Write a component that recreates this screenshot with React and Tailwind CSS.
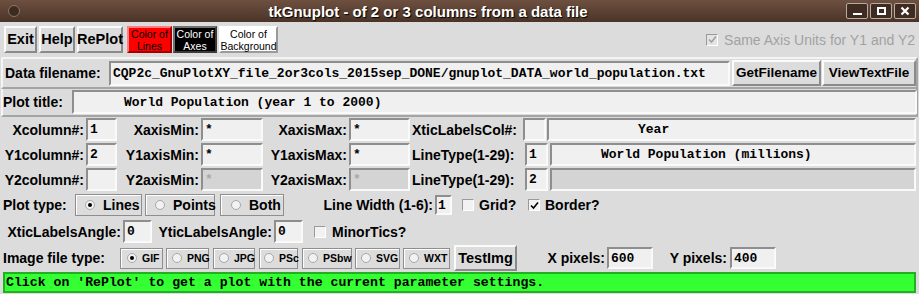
import React from "react";

const SANS = "font-['Liberation_Sans',Arial,sans-serif]";
const MONO = "font-['Liberation_Mono','Courier_New',monospace]";

function Entry({ className = "", children, disabled }) {
  return (
    <div
      className={`box-border border-2 border-t-[#8e8e8e] border-l-[#8e8e8e] border-b-[#fafafa] border-r-[#fafafa] ${
        disabled ? "bg-[#d4d4d4] text-[#a9a9a9]" : "bg-[#f0f0f0] text-black"
      } ${MONO} font-bold text-[13px] leading-none flex items-center pl-[1px] whitespace-pre overflow-hidden shrink-0 ${className}`}
    >
      {children}
    </div>
  );
}

function Label({ className = "", children }) {
  return (
    <div className={`${SANS} font-bold text-[14px] leading-none text-black whitespace-nowrap shrink-0 ${className}`}>
      {children}
    </div>
  );
}

function Button({ className = "", children }) {
  return (
    <div
      className={`box-border border-2 border-t-[#fbfbfb] border-l-[#fbfbfb] border-b-[#8a8a8a] border-r-[#8a8a8a] bg-[#dcdcdc] ${SANS} font-bold text-black flex items-center justify-center leading-none whitespace-nowrap shrink-0 ${className}`}
    >
      {children}
    </div>
  );
}

function Check({ checked, disabled }) {
  return (
    <div
      className={`w-[12px] h-[12px] box-border border border-t-[#9a9a9a] border-l-[#9a9a9a] border-b-[#ffffff] border-r-[#ffffff] ${
        disabled ? "bg-[#e4e4e4]" : "bg-[#f2f2f2]"
      } flex items-center justify-center shrink-0`}
    >
      {checked && (
        <svg width="9" height="9" viewBox="0 0 9 9">
          <path d="M1 4.5 L3.5 7 L8 1.5" fill="none" stroke={disabled ? "#a0a0a0" : "#000"} strokeWidth="1.6" />
        </svg>
      )}
    </div>
  );
}

function Radio({ selected }) {
  return (
    <div className="w-[10px] h-[10px] rounded-full box-border border border-[#a8a8a8] bg-[#f2f2f2] flex items-center justify-center shrink-0">
      {selected && <div className="w-[4px] h-[4px] rounded-full bg-black" />}
    </div>
  );
}

function RadioFrame({ className = "", selected, children, small }) {
  return (
    <div
      className={`box-border border border-[#8e8e8e] shadow-[inset_1px_1px_0_#ffffff] bg-[#dcdcdc] flex items-center shrink-0 ${className}`}
    >
      <Radio selected={selected} />
      <span
        className={`${SANS} font-bold text-black leading-none whitespace-nowrap ${
          small ? "text-[10.5px] ml-[5px]" : "text-[14px] ml-[8px]"
        }`}
      >
        {children}
      </span>
    </div>
  );
}

export default function App() {
  return (
    <div className={`w-[919px] h-[294px] bg-[#dcdcdc] overflow-hidden flex flex-col ${SANS}`}>
      {/* Title bar */}
      <div className="h-[22px] shrink-0 bg-gradient-to-b from-[#6e5040] to-[#4a3427] flex items-center relative">
        <div className="ml-[8px] w-[12px] h-[12px] rounded-full bg-[#3d2b21] border border-[#8a7668]" />
        <div className="flex-1 flex justify-center">
          <span className="text-white font-bold text-[15px] leading-none [text-shadow:1px_1px_1px_#000] ml-[-10px]">
            tkGnuplot - of 2 or 3 columns from a data file
          </span>
        </div>
        <div className="flex items-center gap-[2px] mr-[3px]">
          <div className="w-[22px] h-[16px] box-border border border-[#b8aaa0] rounded-[2px] bg-[#3e2c22] flex items-end justify-center pb-[3px]">
            <div className="w-[9px] h-[2px] bg-white" />
          </div>
          <div className="w-[22px] h-[16px] box-border border border-[#b8aaa0] rounded-[2px] bg-[#3e2c22] flex items-center justify-center">
            <div className="w-[9px] h-[8px] box-border border-2 border-white" />
          </div>
          <div className="w-[22px] h-[16px] box-border border border-[#b8aaa0] rounded-[2px] bg-[#3e2c22] flex items-center justify-center">
            <svg width="10" height="10" viewBox="0 0 10 10">
              <path d="M1.5 1.5 L8.5 8.5 M8.5 1.5 L1.5 8.5" stroke="#fff" strokeWidth="2.2" />
            </svg>
          </div>
        </div>
      </div>

      {/* Row 1: buttons */}
      <div className="h-[35px] shrink-0 flex items-center pl-[4px] pr-[4px]">
        <Button className="w-[33px] h-[27px] text-[14.5px]">Exit</Button>
        <Button className="w-[36px] h-[27px] text-[14.5px] ml-[2px]">Help</Button>
        <Button className="w-[46px] h-[27px] text-[14.5px] ml-[2px]">RePlot</Button>
        <div className="w-[45px] h-[27px] ml-[4px] box-border border-2 border-t-[#ff8080] border-l-[#ff8080] border-b-[#a00000] border-r-[#a00000] bg-[#ff0000] flex flex-col items-center justify-center text-[10.5px] leading-[12px] text-black shrink-0">
          <span>Color of</span>
          <span>Lines</span>
        </div>
        <div className="w-[44px] h-[27px] ml-[1px] box-border border-2 border-t-[#707070] border-l-[#707070] border-b-[#3a3a3a] border-r-[#3a3a3a] bg-black flex flex-col items-center justify-center text-[10.5px] leading-[12px] text-white shrink-0">
          <span>Color of</span>
          <span>Axes</span>
        </div>
        <div className="w-[59px] h-[27px] ml-[2px] box-border border-2 border-t-[#ffffff] border-l-[#ffffff] border-b-[#9a9a9a] border-r-[#9a9a9a] bg-white flex flex-col items-center justify-center text-[10.5px] leading-[12px] text-black shrink-0">
          <span>Color of</span>
          <span>Background</span>
        </div>
        <div className="flex-1" />
        <Check checked disabled />
        <span className="ml-[6px] text-[14px] text-[#a2a2a2] leading-none whitespace-nowrap">
          Same Axis Units for Y1 and Y2
        </span>
      </div>

      {/* Row 2: data filename */}
      <div className="h-[32px] shrink-0 mx-[1px] box-border border-2 border-t-[#f4f4f4] border-l-[#f4f4f4] border-b-[#a4a4a4] border-r-[#a4a4a4] flex items-center">
        <Label className="w-[106px] pl-[2px]">Data filename:</Label>
        <Entry className="w-[621px] h-[25px] text-[13.3px] pl-[2px]">
          CQP2c_GnuPlotXY_file_2or3cols_2015sep_DONE/gnuplot_DATA_world_population.txt
        </Entry>
        <Button className="w-[89px] h-[26px] text-[13.5px] ml-[2px]">GetFilename</Button>
        <Button className="w-[94px] h-[26px] text-[13.5px] ml-[1px]">ViewTextFile</Button>
      </div>

      {/* Row 3: plot title */}
      <div className="h-[28px] shrink-0 mx-[1px] box-border border-l-2 border-r-2 border-b-2 border-l-[#f4f4f4] border-r-[#a4a4a4] border-b-[#a4a4a4] flex items-center">
        <Label className="w-[69px] pl-[0px]">Plot title:</Label>
        <Entry className="w-[845px] h-[24px] pl-[50px]">World Population (year 1 to 2000)</Entry>
      </div>

      {/* Row 4 */}
      <div className="h-[25px] shrink-0 flex items-center">
        <Label className="w-[86px] text-right pr-[2px]">Xcolumn#:</Label>
        <Entry className="w-[31px] h-[23px] pl-[2px]">1</Entry>
        <Label className="w-[84px] text-right pr-[2px]">XaxisMin:</Label>
        <Entry className="w-[62px] h-[23px] pl-[2px]">*</Entry>
        <Label className="w-[86px] text-right pr-[2px]">XaxisMax:</Label>
        <Entry className="w-[61px] h-[23px] pl-[2px]">*</Entry>
        <Label className="w-[113px] pl-[2px]">XticLabelsCol#:</Label>
        <Entry className="w-[23px] h-[23px]"></Entry>
        <Entry className="w-[369px] h-[23px] ml-[1px] pl-[89px]">Year</Entry>
      </div>

      {/* Row 5 */}
      <div className="h-[25px] shrink-0 flex items-center">
        <Label className="w-[86px] text-right pr-[2px]">Y1column#:</Label>
        <Entry className="w-[31px] h-[23px] pl-[2px]">2</Entry>
        <Label className="w-[84px] text-right pr-[2px]">Y1axisMin:</Label>
        <Entry className="w-[62px] h-[23px] pl-[2px]">*</Entry>
        <Label className="w-[86px] text-right pr-[2px]">Y1axisMax:</Label>
        <Entry className="w-[61px] h-[23px] pl-[2px]">*</Entry>
        <Label className="w-[115px] pl-[2px]">LineType(1-29):</Label>
        <Entry className="w-[23px] h-[23px] pl-[2px]">1</Entry>
        <Entry className="w-[366px] h-[23px] ml-[2px] pl-[49px]">World Population (millions)</Entry>
      </div>

      {/* Row 6 */}
      <div className="h-[25px] shrink-0 flex items-center">
        <Label className="w-[86px] text-right pr-[2px]">Y2column#:</Label>
        <Entry className="w-[31px] h-[23px] pl-[2px]"></Entry>
        <Label className="w-[84px] text-right pr-[2px]">Y2axisMin:</Label>
        <Entry disabled className="w-[62px] h-[23px] pl-[2px]">*</Entry>
        <Label className="w-[86px] text-right pr-[2px]">Y2axisMax:</Label>
        <Entry disabled className="w-[61px] h-[23px] pl-[2px]">*</Entry>
        <Label className="w-[115px] pl-[2px]">LineType(1-29):</Label>
        <Entry className="w-[23px] h-[23px] pl-[2px]">2</Entry>
        <Entry disabled className="w-[366px] h-[23px] ml-[2px]"></Entry>
      </div>

      {/* Row 7: plot type */}
      <div className="h-[26px] shrink-0 flex items-center pl-[3px]">
        <Label className="w-[72px]">Plot type:</Label>
        <RadioFrame selected className="w-[67px] h-[22px] pl-[9px]">Lines</RadioFrame>
        <RadioFrame className="w-[70px] h-[22px] pl-[9px] ml-[3px]">Points</RadioFrame>
        <RadioFrame className="w-[64px] h-[22px] pl-[10px] ml-[5px]">Both</RadioFrame>
        <Label className="w-[151px] text-right pr-[2px]">Line Width (1-6):</Label>
        <Entry className="w-[17px] h-[20px] pl-[1px]">1</Entry>
        <div className="ml-[10px]"><Check /></div>
        <Label className="w-[54px] pl-[5px]">Grid?</Label>
        <Check checked />
        <Label className="pl-[5px]">Border?</Label>
      </div>

      {/* Row 8: tic angles */}
      <div className="h-[27px] shrink-0 flex items-center">
        <Label className="w-[123px] text-right pr-[2px]">XticLabelsAngle:</Label>
        <Entry className="w-[29px] h-[23px] pl-[2px]">0</Entry>
        <Label className="w-[122px] text-right pr-[2px]">YticLabelsAngle:</Label>
        <Entry className="w-[29px] h-[23px] pl-[2px]">0</Entry>
        <div className="ml-[11px]"><Check /></div>
        <Label className="pl-[6px]">MinorTics?</Label>
      </div>

      {/* Row 9: image file type */}
      <div className="h-[26px] shrink-0 flex items-center pl-[3px]">
        <Label className="w-[117px]">Image file type:</Label>
        <RadioFrame small selected className="w-[43px] h-[21px] pl-[6px]">GIF</RadioFrame>
        <RadioFrame small className="w-[43px] h-[21px] pl-[5px] ml-[3px]">PNG</RadioFrame>
        <RadioFrame small className="w-[42px] h-[21px] pl-[5px] ml-[4px]">JPG</RadioFrame>
        <RadioFrame small className="w-[39px] h-[21px] pl-[4px] ml-[4px]">PSc</RadioFrame>
        <RadioFrame small className="w-[50px] h-[21px] pl-[5px] ml-[4px]">PSbw</RadioFrame>
        <RadioFrame small className="w-[45px] h-[21px] pl-[5px] ml-[3px]">SVG</RadioFrame>
        <RadioFrame small className="w-[47px] h-[21px] pl-[5px] ml-[3px]">WXT</RadioFrame>
        <Button className="w-[63px] h-[26px] text-[14.5px] ml-[4px]">TestImg</Button>
        <Label className="w-[90px] text-right pr-[2px]">X pixels:</Label>
        <Entry className="w-[46px] h-[22px] pl-[2px]">600</Entry>
        <Label className="w-[77px] text-right pr-[3px]">Y pixels:</Label>
        <Entry className="w-[46px] h-[22px] pl-[2px]">400</Entry>
      </div>

      {/* Status */}
      <div className="h-[23px] shrink-0 pl-[3px] pr-[3px] pt-[1px]">
        <div className={`h-[21px] box-border border-2 border-[#22b022] bg-[#33ff33] flex items-center pl-[1px] ${MONO} font-bold text-[13.2px] leading-none text-black whitespace-pre`}>
          Click on 'RePlot' to get a plot with the current parameter settings.
        </div>
      </div>
    </div>
  );
}
